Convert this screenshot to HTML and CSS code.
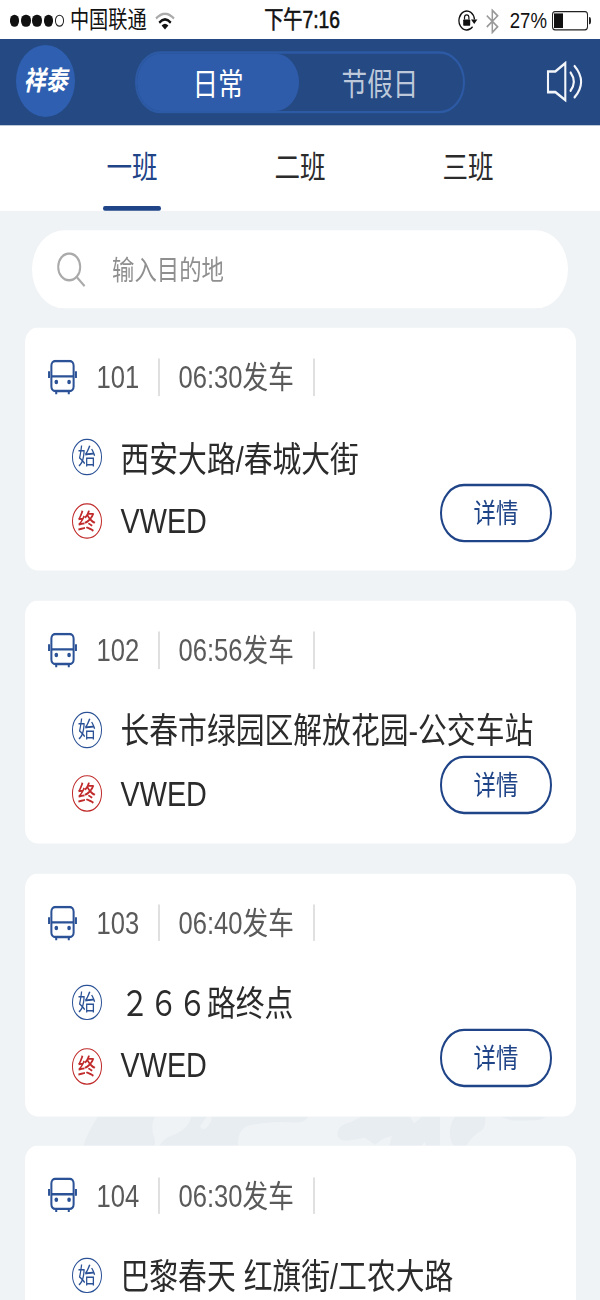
FILE: index.html
```html
<!DOCTYPE html>
<html lang="zh-CN">
<head>
  <meta charset="UTF-8">
  <meta name="viewport" content="width=device-width, initial-scale=1.0">
  <title>班车</title>
  <link rel="stylesheet" href="styles.css">
</head>
<body>
  <svg class="sprite" width="0" height="0">
    <symbol id="bus" viewBox="0 0 30 30">
      <g fill="none" stroke="#2b5296" stroke-width="2.1">
        <rect x="3.5" y="1.2" width="23" height="25.6" rx="4"/>
        <path d="M3.5 14.3h23M1.1 10v5.6M28.9 10v5.6M8.5 27v2.4M21.5 27v2.4"/>
      </g>
      <circle cx="8.6" cy="19" r="1.9" fill="#2b5296"/>
      <circle cx="21.8" cy="19" r="1.9" fill="#2b5296"/>
    </symbol>
  </svg>
  <div class="screen">
    <div class="statusbar">
      <div class="status-left">
        <span class="dot"></span><span class="dot"></span><span class="dot"></span><span class="dot"></span><span class="dot empty"></span>
        <span class="carrier">中国联通</span>
        <svg class="wifi" width="20" height="15" viewBox="0 0 20 15">
          <path d="M1 5.2Q10-2.8 19 5.2" fill="none" stroke="#aaa" stroke-width="2"/>
          <path d="M4.2 8.6Q10 3.2 15.8 8.6" fill="none" stroke="#111" stroke-width="2.2"/>
          <path d="M10 14.2L6.6 11Q10 8 13.4 11z" fill="#111"/>
        </svg>
      </div>
      <div class="time">下午7:16</div>
      <div class="status-right">
        <svg width="20" height="18" viewBox="0 0 20 18">
          <path d="M14.6 14A7.8 7.8 0 1 1 16.5 8" fill="none" stroke="#111" stroke-width="1.3"/>
          <path d="M13 8h6.4l-3.2 3.6z" fill="#111"/>
          <rect x="5.2" y="8" width="7" height="5.2" rx=".6" fill="#111"/>
          <path d="M6.5 8V6.4a2.2 2.2 0 0 1 4.4 0V8" fill="none" stroke="#111" stroke-width="1.2"/>
        </svg>
        <svg class="bluetooth" width="13" height="21" viewBox="0 0 13 21">
          <path d="M.8 5.8L11.6 15 6.3 19.6V1.4l5.3 4.6L.8 15.2" fill="none" stroke="#999" stroke-width="1.5"/>
        </svg>
        <span class="percent">27%</span>
        <span class="battery"><span class="level"></span></span>
        <span class="battery-tip"></span>
      </div>
    </div>

    <div class="header">
      <div class="logo">祥泰</div>
      <div class="switch">
        <div class="switch-item active">日常</div>
        <div class="switch-item">节假日</div>
      </div>
      <svg class="speaker" width="38" height="34" viewBox="0 0 38 34">
        <g fill="none" stroke="#f2f5fa" stroke-width="2.1">
          <path d="M2 8.6h7.4L19.3 1.8v30.4L9.4 25.6H2z"/>
          <path d="M24.6 9.6q6.4 7.4 0 14.8M28.6 4.2q13 12.8 0 25.6" stroke-linecap="round"/>
        </g>
      </svg>
    </div>

    <div class="tabs">
      <div class="tab active">一班</div>
      <div class="tab">二班</div>
      <div class="tab">三班</div>
    </div>

    <div class="content">
      <svg class="watermark" viewBox="0 0 600 30" preserveAspectRatio="none">
        <path d="M98 0h57q-5 10-1 20 2 5 0 10H83q4-14 15-30z"/>
        <path d="M191 0h16q-4 5-7 10 4 6 9-2 4-4 2-8h97q-2 6-12 6-30-2-50 4-9 5-8 20h-28l-4-1-2 1h-45q4-9 15-12 16-7 17-18z"/>
        <path d="M338 14q2-6 12-8l12-6h48l4 7 8-7h18v30h-14l-1-5-4 5h-32l3-11-9 3-8 6-10-7-18 3q-12 0-9-10z"/>
        <path d="M455 0h30q2 10-5 15-9 5-14 15h-12q-9-15 1-30zM499 0h47q-4 4-14 4h-20z"/>
      </svg>

      <div class="search">
        <svg width="29" height="29" viewBox="0 0 29 29">
          <circle cx="12.2" cy="12" r="11" fill="none" stroke="#aaa" stroke-width="2"/>
          <path d="M20 20.5l7.6 7.2" fill="none" stroke="#aaa" stroke-width="2"/>
        </svg>
        <span>输入目的地</span>
      </div>

      <div class="card">
        <div class="meta">
          <svg class="bus"><use href="#bus"/></svg>
          <span class="number">101</span>
          <span class="depart">06:30发车</span>
        </div>
        <div class="route">
          <div class="stops">
            <div class="stop"><span class="badge start">始</span><span class="name">西安大路/春城大街</span></div>
            <div class="stop"><span class="badge end">终</span>VWED</div>
          </div>
          <div class="detail">详情</div>
        </div>
      </div>

      <div class="card">
        <div class="meta">
          <svg class="bus"><use href="#bus"/></svg>
          <span class="number">102</span>
          <span class="depart">06:56发车</span>
        </div>
        <div class="route">
          <div class="stops">
            <div class="stop"><span class="badge start">始</span><span class="name">长春市绿园区解放花园-公交车站</span></div>
            <div class="stop"><span class="badge end">终</span>VWED</div>
          </div>
          <div class="detail">详情</div>
        </div>
      </div>

      <div class="card">
        <div class="meta">
          <svg class="bus"><use href="#bus"/></svg>
          <span class="number">103</span>
          <span class="depart">06:40发车</span>
        </div>
        <div class="route">
          <div class="stops">
            <div class="stop"><span class="badge start">始</span><span class="name">２６６路终点</span></div>
            <div class="stop"><span class="badge end">终</span>VWED</div>
          </div>
          <div class="detail">详情</div>
        </div>
      </div>

      <div class="card">
        <div class="meta">
          <svg class="bus"><use href="#bus"/></svg>
          <span class="number">104</span>
          <span class="depart">06:30发车</span>
        </div>
        <div class="route">
          <div class="stops">
            <div class="stop"><span class="badge start">始</span><span class="name">巴黎春天 红旗街/工农大路</span></div>
          </div>
        </div>
      </div>
    </div>
  </div>
</body>
</html>
```
FILE: styles.css
```css
* {
  box-sizing: border-box;
}
html, body {
  margin: 0;
  height: 1300px;
  overflow: hidden;
}
body {
  font-family: "Liberation Sans", "Noto Sans CJK SC", sans-serif;
  color: #2b2b2b;
  background-color: #eff3f5;
}
.sprite {
  position: absolute;
}
/* the 600x1066 layout is stretched to fill the tall screen */
.screen {
  width: 600px;
  height: 1066.67px;
  overflow: hidden;
  transform: scaleY(1.21875);
  transform-origin: 0 0;
}

/* status bar */
.statusbar {
  display: grid;
  grid-template-columns: 1fr auto 1fr;
  align-items: center;
  height: 32.2px;
  padding: 0 9px 0 10px;
  background-color: #fff;
  color: #111;
  font-size: 19.2px;
  line-height: 34px;
}
.status-left, .status-right {
  display: flex;
  align-items: center;
}
.status-right {
  justify-content: flex-end;
}
.dot {
  width: 9.4px;
  height: 9.4px;
  margin-right: 1.8px;
  border-radius: 50%;
  background-color: #111;
}
.dot.empty {
  border: 1px solid #222;
  background-color: #fff;
}
.carrier {
  margin-left: 4px;
}
.wifi {
  margin-left: 8px;
}
.time {
  margin-left: 3px;
  -webkit-text-stroke: 0.5px #111;
}
.bluetooth {
  margin: 0 11px 0 8px;
}
.percent {
  font-size: 18.6px;
}
.battery {
  width: 36px;
  height: 15.5px;
  margin-left: 5px;
  padding: 1.2px;
  border: 1px solid #222;
  border-radius: 3px;
}
.level {
  display: block;
  width: 9px;
  height: 100%;
  background-color: #111;
}
.battery-tip {
  width: 2px;
  height: 6px;
  margin-left: 1px;
  border-radius: 0 2px 2px 0;
  background-color: #222;
}

/* header */
.header {
  display: flex;
  align-items: center;
  height: 70.4px;
  padding: 0 16px;
  background-color: #254982;
}
.logo {
  width: 59px;
  height: 59px;
  border-radius: 50%;
  margin-top: -1px;
  background-color: #2f5fb0;
  color: #fff;
  font-size: 22px;
  font-style: italic;
  font-weight: 700;
  line-height: 59px;
  text-align: center;
}
.switch {
  display: flex;
  width: 330px;
  height: 51px;
  margin-left: 60px;
  border: 2px solid #2d5aa5;
  border-radius: 26px;
}
.switch-item {
  width: 162px;
  color: #bdc8da;
  font-size: 25.6px;
  line-height: 50px;
  text-align: center;
}
.switch-item.active {
  border-radius: 26px;
  background-color: #2e5caa;
  color: #fff;
}
.speaker {
  margin-left: auto;
}

/* tabs */
.tabs {
  display: flex;
  justify-content: space-between;
  height: 70.4px;
  padding: 0 103px;
  background-color: #fff;
}
.tab {
  width: 58px;
  font-size: 25.6px;
  line-height: 69px;
  text-align: center;
}
.tab.active {
  color: #1f4487;
}
.tab.active::after {
  content: "";
  display: block;
  height: 3.6px;
  margin-top: -2.2px;
  border-radius: 2px;
  background-color: #1f4487;
}

/* list */
.content {
  position: relative;
  padding: 16px 24.5px;
}
.watermark {
  position: absolute;
  left: 0;
  top: 742.6px;
  width: 600px;
  height: 25px;
  fill: #e8edf2;
}
.search {
  display: flex;
  align-items: center;
  height: 63.6px;
  margin: 0 7.5px 16.4px;
  padding-left: 25px;
  border-radius: 32px;
  background-color: #fff;
  color: #8f8f8f;
  font-size: 22.4px;
}
.search svg {
  margin-top: 2px;
}
.search span {
  margin: -2px 0 0 26px;
}
.card {
  position: relative;
  height: 199.4px;
  margin-bottom: 24.4px;
  padding: 25.5px 23.5px 0;
  border-radius: 12px;
  background-color: #fff;
}
.meta {
  display: flex;
  align-items: center;
  height: 30.4px;
  color: #5a5a5a;
  font-size: 25.6px;
}
.bus {
  width: 29px;
  height: 29px;
}
.number, .depart {
  height: 30.4px;
  border-right: 2px solid #e0e0e0;
  line-height: 30.4px;
}
.number {
  width: 63px;
  margin-left: 19.5px;
}
.depart {
  width: 136px;
  margin-left: 19px;
}
.route {
  display: grid;
  margin-top: 24px;
}
.stops, .detail {
  grid-area: 1 / 1;
}
.stop {
  display: flex;
  align-items: center;
  height: 52.4px;
  padding-left: 24px;
  font-size: 28.8px;
  white-space: nowrap;
}
.name {
  margin-top: -2px;
}
.badge {
  width: 29.5px;
  height: 29.5px;
  margin-right: 19px;
  border: 1.5px solid;
  border-radius: 50%;
  font-size: 18px;
  line-height: 28px;
  text-align: center;
}
.start {
  color: #2b5296;
}
.end {
  color: #c02a2a;
  font-weight: 500;
}
.detail {
  align-self: end;
  justify-self: end;
  width: 112px;
  height: 48px;
  margin-bottom: 9px;
  border: 2px solid #1f4487;
  border-radius: 24px;
  color: #1f4487;
  font-size: 22.4px;
  line-height: 46px;
  text-align: center;
}
```
